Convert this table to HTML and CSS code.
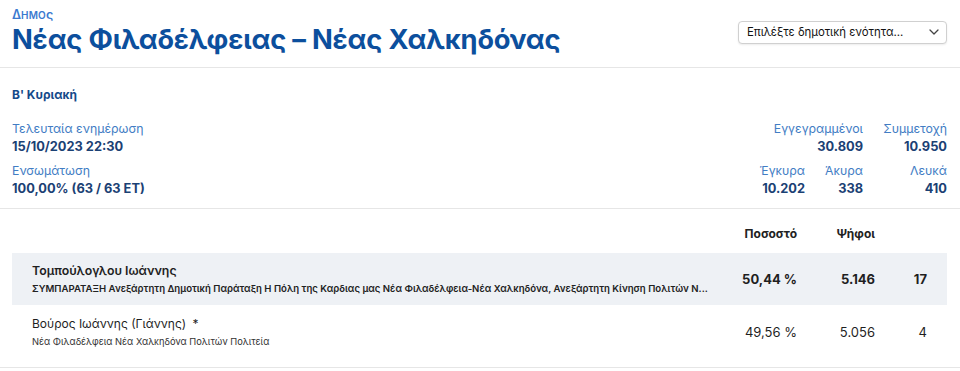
FILE: index.html
```html
<!DOCTYPE html>
<html lang="el">
<head>
<meta charset="utf-8">
<title>Δήμος Νέας Φιλαδέλφειας – Νέας Χαλκηδόνας</title>
<link rel="stylesheet" href="styles.css">
</head>
<body>
<header class="head">
  <div class="head-titles">
    <div class="kicker">Δ<span class="sc">ΗΜΟ</span>ς</div>
    <h1 class="title">Νέας Φιλαδέλφειας – Νέας Χαλκηδόνας</h1>
  </div>
  <div class="select-wrap">
    <select class="select">
      <option>Επιλέξτε δημοτική ενότητα...</option>
    </select>
    <svg class="chev" width="10" height="6" viewBox="0 0 10 6"><path d="M1 1l4 4 4-4" fill="none" stroke="#444" stroke-width="1.3" stroke-linecap="round" stroke-linejoin="round"/></svg>
  </div>
</header>

<section class="info">
  <div class="round">Β' Κυριακή</div>
  <div class="info-grid">
    <div class="left">
      <div class="stat">
        <div class="lbl">Τελευταία ενημέρωση</div>
        <div class="val">15/10/2023 22:30</div>
      </div>
      <div class="stat">
        <div class="lbl">Ενσωμάτωση</div>
        <div class="val">100,00% (63 / 63 ΕΤ)</div>
      </div>
    </div>
    <div class="right">
      <div class="stat span2">
        <div class="lbl">Εγγεγραμμένοι</div>
        <div class="val">30.809</div>
      </div>
      <div class="stat">
        <div class="lbl">Συμμετοχή</div>
        <div class="val">10.950</div>
      </div>
      <div class="stat">
        <div class="lbl">Έγκυρα</div>
        <div class="val">10.202</div>
      </div>
      <div class="stat">
        <div class="lbl">Άκυρα</div>
        <div class="val">338</div>
      </div>
      <div class="stat">
        <div class="lbl">Λευκά</div>
        <div class="val">410</div>
      </div>
    </div>
  </div>
</section>

<section class="results">
  <div class="row row-head">
    <div class="c-name"></div>
    <div class="c-num">Ποσοστό</div>
    <div class="c-num">Ψήφοι</div>
    <div class="c-seat"></div>
  </div>
  <div class="row row-win">
    <div class="c-name">
      <div class="cand">Τομπούλογλου Ιωάννης</div>
      <div class="party">ΣΥΜΠΑΡΑΤΑΞΗ Ανεξάρτητη Δημοτική Παράταξη Η Πόλη της Καρδιας μας Νέα Φιλαδέλφεια-Νέα Χαλκηδόνα, Ανεξάρτητη Κίνηση Πολιτών Ν...</div>
    </div>
    <div class="c-num">50,44 %</div>
    <div class="c-num">5.146</div>
    <div class="c-seat">17</div>
  </div>
  <div class="row row-plain">
    <div class="c-name">
      <div class="cand">Βούρος Ιωάννης (Γιάννης) <span class="star">*</span></div>
      <div class="party">Νέα Φιλαδέλφεια Νέα Χαλκηδόνα Πολιτών Πολιτεία</div>
    </div>
    <div class="c-num">49,56 %</div>
    <div class="c-num">5.056</div>
    <div class="c-seat">4</div>
  </div>
</section>
</body>
</html>
```

FILE: styles.css
```css
* { box-sizing: border-box; }
html, body { margin: 0; padding: 0; background: #fff; }
body {
  font-family: Inter, "Noto Sans", "Liberation Sans", sans-serif;
  color: #1f1f1f;
  width: 960px;
}

.head {
  display: flex;
  justify-content: space-between;
  align-items: flex-start;
  padding: 7px 13px 0 12px;
  height: 68px;
  border-bottom: 1px solid #e6e6e6;
}
.kicker {
  font-size: 12.5px;
  font-weight: 600;
  color: #3b7ad0;
  line-height: 16px;
}
.kicker .sc { font-size: 10px; letter-spacing: 0.2px; }
.title {
  margin: 0;
  font-size: 27.3px;
  font-weight: 700;
  color: #0c4f9d;
  line-height: 34px;
  letter-spacing: -0.2px;
}
.select-wrap {
  position: relative;
  margin-top: 13px;
  width: 209px;
  height: 23px;
}
.select {
  appearance: none;
  -webkit-appearance: none;
  width: 100%;
  height: 100%;
  border: 1px solid #d0d0d0;
  border-radius: 4px;
  background: #fff;
  box-shadow: 0 1px 2px rgba(0,0,0,0.08);
  font-family: Inter, "Noto Sans", sans-serif;
  font-size: 11.4px;
  color: #111;
  padding: 0 24px 0 8px;
}
.chev {
  position: absolute;
  right: 8px;
  top: 9px;
  pointer-events: none;
}

.info {
  padding: 19px 13px 0 12px;
  height: 141px;
  border-bottom: 1px solid #e6e6e6;
}
.round {
  font-size: 12px;
  font-weight: 700;
  color: #154a8a;
  line-height: 16px;
  margin-bottom: 17px;
}
.info-grid {
  display: flex;
  justify-content: space-between;
}
.left {
  display: flex;
  flex-direction: column;
  gap: 6px;
}
.right {
  display: grid;
  grid-template-columns: 60px 58px 84px;
  row-gap: 6px;
  justify-items: end;
  text-align: right;
}
.span2 { grid-column: span 2; }
.lbl {
  font-size: 12.3px;
  color: #427dc4;
  line-height: 18px;
}
.val {
  font-size: 12.8px;
  font-weight: 700;
  color: #1b4174;
  line-height: 18px;
}

.results {
  padding: 17px 13px 0 12px;
  border-bottom: 1px solid #e6e6e6;
}
.row {
  display: flex;
  align-items: center;
  padding: 0 20px;
  height: 61px;
}
.row-head {
  align-items: flex-start;
  font-size: 12px;
  font-weight: 700;
  color: #222;
  height: 27px;
}
.row-win {
  background: #eef1f5;
  height: 52px;
  font-weight: 700;
}
.row-plain {
  height: 62px;
  padding-bottom: 8px;
}
.c-name {
  flex: 1;
  min-width: 0;
  padding-right: 2px;
}
.c-num {
  width: 80px;
  text-align: right;
  font-size: 13px;
  flex: none;
}
.row-head .c-num { font-size: 12px; }
.c-num:nth-child(3) { width: 78px; }
.c-seat {
  width: 52px;
  text-align: right;
  font-size: 13px;
  flex: none;
}
.cand {
  font-size: 12px;
  line-height: 18px;
  font-weight: 400;
  color: #1f1f1f;
}
.row-win .cand { font-size: 12.3px; font-weight: 600; }
.star { margin-left: 3px; }
.party {
  font-size: 9.3px;
  line-height: 14px;
  margin-top: 2px;
  white-space: nowrap;
  overflow: hidden;
  font-weight: 400;
  color: #333;
}
.row-win .party { font-size: 9.6px; font-weight: 600; color: #222; }
```
